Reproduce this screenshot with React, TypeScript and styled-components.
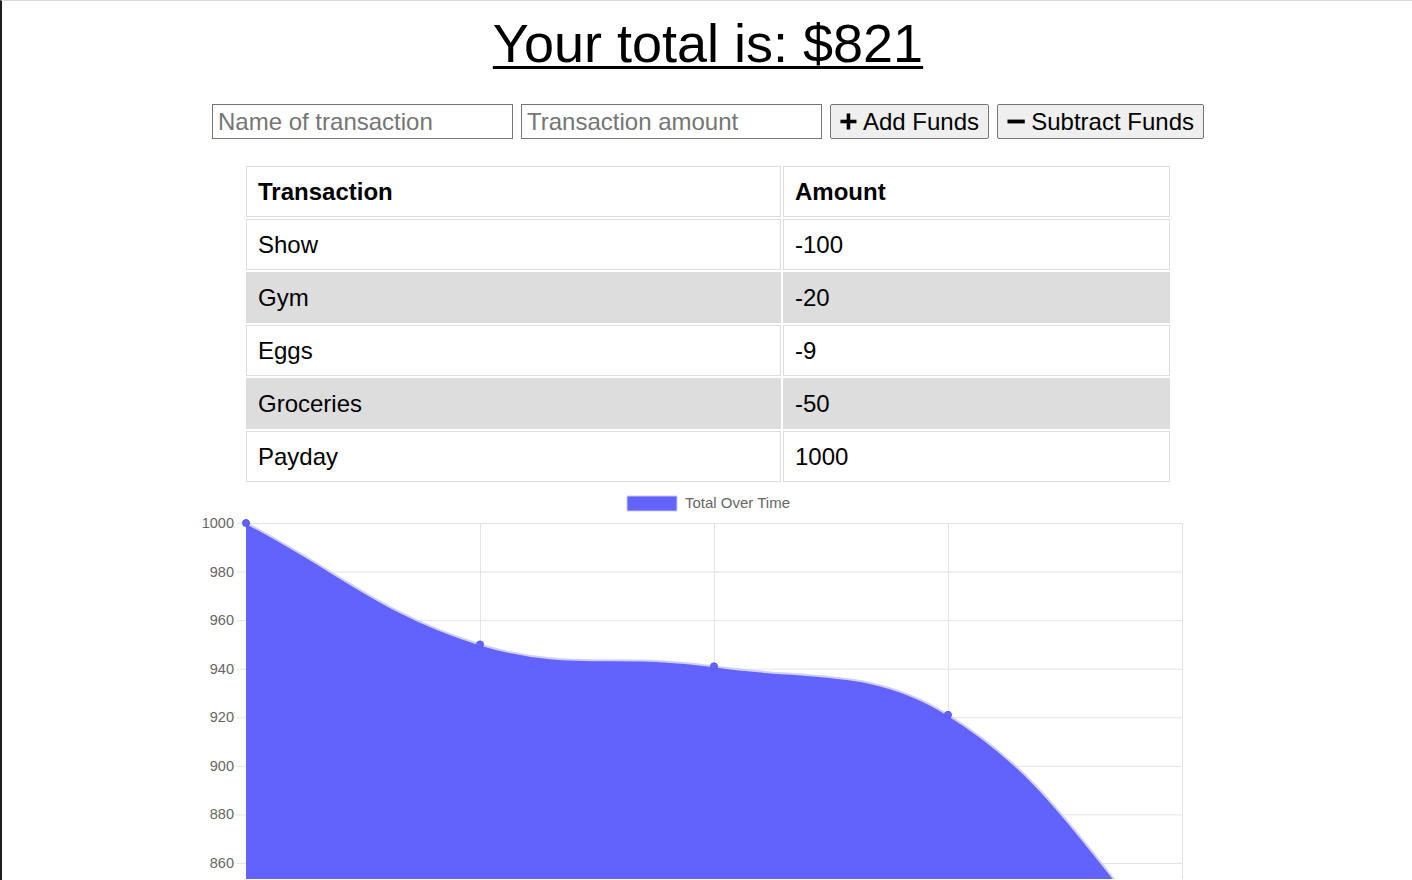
import React from 'react';
import styled, { createGlobalStyle } from 'styled-components';

interface Transaction {
  name: string;
  value: number;
}

const transactions: Transaction[] = [
  { name: 'Show', value: -100 },
  { name: 'Gym', value: -20 },
  { name: 'Eggs', value: -9 },
  { name: 'Groceries', value: -50 },
  { name: 'Payday', value: 1000 },
];

const GlobalStyle = createGlobalStyle`
  html, body {
    margin: 0;
    padding: 0;
    overflow: hidden;
    background: #fff;
  }
  body {
    font-family: "Liberation Sans", Arial, sans-serif;
  }
`;

const Page = styled.div`
  height: 879px;
  overflow: hidden;
  padding-left: 2px;
  border-left: 2px solid #1f1f1f;
  border-top: 1px solid #dadada;
  display: flex;
  flex-direction: column;
  align-items: center;
`;

const Total = styled.h1`
  margin: 11px 0 30px;
  font-size: 54px;
  font-weight: normal;
  line-height: 62px;
  text-decoration: underline;
  text-decoration-thickness: 3px;
  text-underline-offset: 4px;
  color: #000;
`;

const Form = styled.div`
  display: flex;
  gap: 8px;
  margin-bottom: 25px;
`;

const Input = styled.input`
  box-sizing: border-box;
  width: 301px;
  height: 35px;
  padding: 1px 5px;
  border: 1px solid #767676;
  border-radius: 0;
  font-family: "Liberation Sans", Arial, sans-serif;
  font-size: 24px;
  color: #000;
  &::placeholder {
    color: #757575;
  }
`;

const Button = styled.button<{ $width: number }>`
  box-sizing: border-box;
  width: ${(p) => p.$width}px;
  height: 35px;
  display: flex;
  align-items: center;
  gap: 6px;
  padding: 0 9px;
  white-space: nowrap;
  background: #efefef;
  border: 1px solid #767676;
  border-radius: 2px;
  font-family: "Liberation Sans", Arial, sans-serif;
  font-size: 24px;
  color: #000;
`;

const Table = styled.table`
  width: 928px;
  border-collapse: separate;
  border-spacing: 2px;
  font-size: 24px;
`;

const Cell = styled.td<{ $head?: boolean; $width?: number }>`
  box-sizing: border-box;
  height: 51px;
  padding: 0 11px;
  border: 1px solid #dddddd;
  text-align: left;
  line-height: 27px;
  font-weight: ${(p) => (p.$head ? 'bold' : 'normal')};
  ${(p) => (p.$width ? `width: ${p.$width}px;` : '')}
`;

const Row = styled.tr<{ $shade: boolean }>`
  background: ${(p) => (p.$shade ? '#dddddd' : '#fff')};
`;

const ChartBox = styled.div`
  margin-top: 2px;
  width: 1056px;
  flex-shrink: 0;
`;

const PlusIcon = () => (
  <svg width="19" height="19" viewBox="0 0 19 19">
    <rect x="7.5" y="0.5" width="4" height="18" fill="#000" />
    <rect x="0.5" y="7.5" width="18" height="4" fill="#000" />
  </svg>
);

const MinusIcon = () => (
  <svg width="19" height="19" viewBox="0 0 19 19">
    <rect x="0.5" y="7.5" width="18" height="4" fill="#000" />
  </svg>
);

// chart geometry, in svg coordinates (svg starts at x=180, y=486 on the page)
const left = 66;
const right = 1002;
const top = 37;
const perUnit = 340 / 140;
const yOf = (v: number) => top + (1000 - v) * perUnit;
const bottom = yOf(820);

function buildPath(pts: { x: number; y: number }[]) {
  const t = 0.4;
  const cps = pts.map((cur, i) => {
    const prev = pts[i - 1] || cur;
    const next = pts[i + 1] || cur;
    const d01 = Math.hypot(cur.x - prev.x, cur.y - prev.y);
    const d12 = Math.hypot(next.x - cur.x, next.y - cur.y);
    const sum = d01 + d12 || 1;
    const fa = (t * d01) / sum;
    const fb = (t * d12) / sum;
    const clampY = (y: number) => Math.min(Math.max(y, top), bottom);
    return {
      px: cur.x - fa * (next.x - prev.x),
      py: clampY(cur.y - fa * (next.y - prev.y)),
      nx: cur.x + fb * (next.x - prev.x),
      ny: clampY(cur.y + fb * (next.y - prev.y)),
    };
  });
  let d = `M${pts[0].x},${pts[0].y}`;
  for (let i = 1; i < pts.length; i++) {
    d += ` C${cps[i - 1].nx},${cps[i - 1].ny} ${cps[i].px},${cps[i].py} ${pts[i].x},${pts[i].y}`;
  }
  return d;
}

const Chart = () => {
  const totals: number[] = [];
  let sum = 0;
  [...transactions].reverse().forEach((tr) => {
    sum += tr.value;
    totals.push(sum);
  });
  const step = (right - left) / (totals.length - 1);
  const pts = totals.map((v, i) => ({ x: left + i * step, y: yOf(v) }));
  const line = buildPath(pts);
  const area = `${line} L${right},${bottom} L${left},${bottom} Z`;
  const grid = [1000, 980, 960, 940, 920, 900, 880, 860, 840, 820];
  // only the labels that fit in the window are drawn
  const labels = [1000, 980, 960, 940, 920, 900, 880, 860];

  return (
    <svg width="1056" height="393" viewBox="0 0 1056 393">
      <rect x="447" y="10" width="50" height="15" fill="#6363fd" stroke="#c9c9f5" strokeWidth="1" />
      <text x="505" y="22" fontSize="15" fill="#666" fontFamily="Liberation Sans, Arial, sans-serif">
        Total Over Time
      </text>
      {grid.map((v) => (
        <line key={v} x1={left - 9} x2={right} y1={yOf(v) + 0.5} y2={yOf(v) + 0.5} stroke="#e3e3e3" />
      ))}
      {labels.map((v) => (
        <text
          key={v}
          x={left - 12}
          y={yOf(v) + 5}
          fontSize="14.5"
          fill="#666"
          textAnchor="end"
          fontFamily="Liberation Sans, Arial, sans-serif"
        >
          {v}
        </text>
      ))}
      {pts.map((p) => (
        <line key={p.x} x1={p.x + 0.5} x2={p.x + 0.5} y1={top} y2={bottom + 9} stroke="#e3e3e3" />
      ))}
      <path d={area} fill="#6262fd" />
      <path d={line} fill="none" stroke="#cfcff5" strokeWidth="2" />
      {pts.map((p) => (
        <circle key={p.x} cx={p.x} cy={p.y} r="3.5" fill="#6262fd" stroke="#5a5af0" strokeWidth="1" />
      ))}
    </svg>
  );
};

const App = () => {
  const total = transactions.reduce((acc, tr) => acc + tr.value, 0);
  return (
    <>
      <GlobalStyle />
      <Page>
        <Total>Your total is: ${total}</Total>
        <Form>
          <Input type="text" placeholder="Name of transaction" />
          <Input type="number" placeholder="Transaction amount" />
          <Button $width={159}>
            <PlusIcon />
            Add Funds
          </Button>
          <Button $width={207}>
            <MinusIcon />
            Subtract Funds
          </Button>
        </Form>
        <Table>
          <thead>
            <tr>
              <Cell as="th" $head $width={535}>
                Transaction
              </Cell>
              <Cell as="th" $head>
                Amount
              </Cell>
            </tr>
          </thead>
          <tbody>
            {transactions.map((tr, i) => (
              <Row key={tr.name} $shade={i % 2 === 1}>
                <Cell>{tr.name}</Cell>
                <Cell>{tr.value}</Cell>
              </Row>
            ))}
          </tbody>
        </Table>
        <ChartBox>
          <Chart />
        </ChartBox>
      </Page>
    </>
  );
};

export default App;
